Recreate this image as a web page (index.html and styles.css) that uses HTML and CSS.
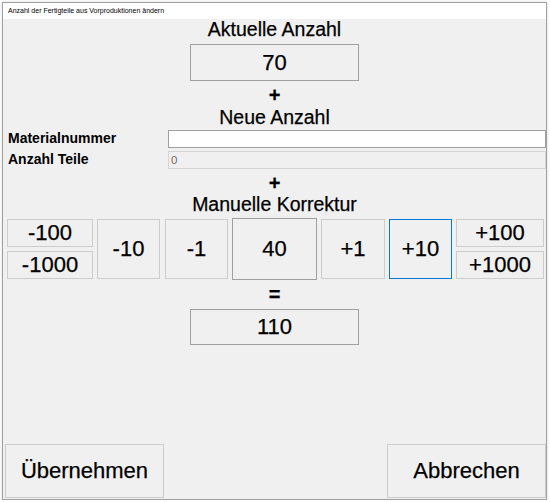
FILE: index.html
```html
<!DOCTYPE html>
<html lang="de">
<head>
<meta charset="utf-8">
<title>Anzahl der Fertigteile aus Vorproduktionen ändern</title>
<link rel="stylesheet" href="styles.css">
</head>
<body>
<div class="window">
  <div class="titlebar">Anzahl der Fertigteile aus Vorproduktionen ändern</div>
  <div class="content">
    <div class="heading">Aktuelle Anzahl</div>
    <div class="valuebox">70</div>
    <div class="op op-plus1">+</div>
    <div class="heading heading-neue">Neue Anzahl</div>
    <div class="field-row">
      <label class="field-label">Materialnummer</label>
      <div class="input"></div>
    </div>
    <div class="field-row field-row-2">
      <label class="field-label">Anzahl Teile</label>
      <div class="input input-disabled">0</div>
    </div>
    <div class="op op-plus2">+</div>
    <div class="heading heading-manuell">Manuelle Korrektur</div>
    <div class="btn-row">
      <div class="stack">
        <div class="btn small">-100</div>
        <div class="btn small">-1000</div>
      </div>
      <div class="btn tall w63">-10</div>
      <div class="btn tall w63 gap-extra">-1</div>
      <div class="valuebox corr">40</div>
      <div class="btn tall w64">+1</div>
      <div class="btn tall w63 focus">+10</div>
      <div class="stack wide">
        <div class="btn small">+100</div>
        <div class="btn small">+1000</div>
      </div>
    </div>
    <div class="op op-eq">=</div>
    <div class="valuebox result">110</div>
    <div class="footer">
      <div class="btn big">Übernehmen</div>
      <div class="btn big">Abbrechen</div>
    </div>
  </div>
</div>
</body>
</html>
```
FILE: styles.css
```css
body {
  margin: 0;
  background: #ffffff;
  font-family: "Liberation Sans", Arial, sans-serif;
  color: #000;
}

.window {
  margin: 2px 0 0 2px;
  width: 545px;
  height: 498px;
  box-sizing: border-box;
  border: 1px solid #a0a0a0;
  display: flex;
  flex-direction: column;
  box-shadow: 0 0 3px rgba(0,0,0,0.15);
}

.titlebar {
  height: 16px;
  background: #ffffff;
  font-size: 7px;
  line-height: 16px;
  padding-left: 5px;
  white-space: nowrap;
}

.content {
  flex: 1;
  background: #f0f0f0;
  display: flex;
  flex-direction: column;
  align-items: center;
  -webkit-text-stroke: 0.25px #000;
}

.heading {
  font-size: 19.5px;
  line-height: 20px;
  height: 20px;
  white-space: nowrap;
}

.heading-neue { margin-top: 2px; }
.heading-manuell { margin-top: 1px; }

.valuebox {
  width: 169px;
  height: 37px;
  box-sizing: border-box;
  border: 1px solid #a0a0a0;
  font-size: 22px;
  display: flex;
  align-items: center;
  justify-content: center;
  margin-top: 5px;
}

.valuebox.corr {
  width: 85px;
  height: 62px;
  margin-top: 0;
}

.valuebox.result {
  height: 36px;
  margin-top: 5px;
}

.op {
  font-weight: bold;
  font-size: 20px;
  line-height: 20px;
  height: 20px;
}

.op-plus1 { margin-top: 4px; }
.op-plus2 { margin-top: 4px; }
.op-eq { margin-top: 4px; }

.field-row {
  align-self: stretch;
  display: flex;
  margin-top: 3px;
  padding-left: 5px;
}

.field-label {
  width: 160px;
  font-size: 14px;
  font-weight: bold;
  line-height: 16px;
  white-space: nowrap;
  -webkit-text-stroke: 0;
}

.input {
  flex: 1;
  height: 18px;
  box-sizing: border-box;
  background: #ffffff;
  border: 1px solid #a0a0a0;
}

.input-disabled {
  background: #f0f0f0;
  border-color: #d4d4d4;
  color: #6d6d6d;
  font-size: 11.5px;
  line-height: 16px;
  padding-left: 2px;
  -webkit-text-stroke: 0;
}

.btn-row {
  align-self: stretch;
  display: flex;
  align-items: center;
  gap: 4px;
  padding-left: 4px;
  margin-top: 4px;
  height: 62px;
}

.btn {
  box-sizing: border-box;
  border: 1px solid #cccccc;
  background: #f0f0f0;
  font-size: 22px;
  display: flex;
  align-items: center;
  justify-content: center;
  white-space: nowrap;
}

.btn.tall { height: 60px; }
.w63 { width: 63px; }
.w64 { width: 64px; }
.gap-extra { margin-left: 1px; }

.btn.focus { border-color: #0078d7; }

.stack {
  width: 86px;
  height: 60px;
  display: flex;
  flex-direction: column;
  gap: 4px;
}

.stack.wide { width: 88px; }

.btn.small { height: 28px; }

.footer {
  align-self: stretch;
  margin-top: auto;
  display: flex;
  justify-content: space-between;
  padding: 0 0 1px 2px;
}

.btn.big {
  width: 159px;
  height: 54px;
}
```
